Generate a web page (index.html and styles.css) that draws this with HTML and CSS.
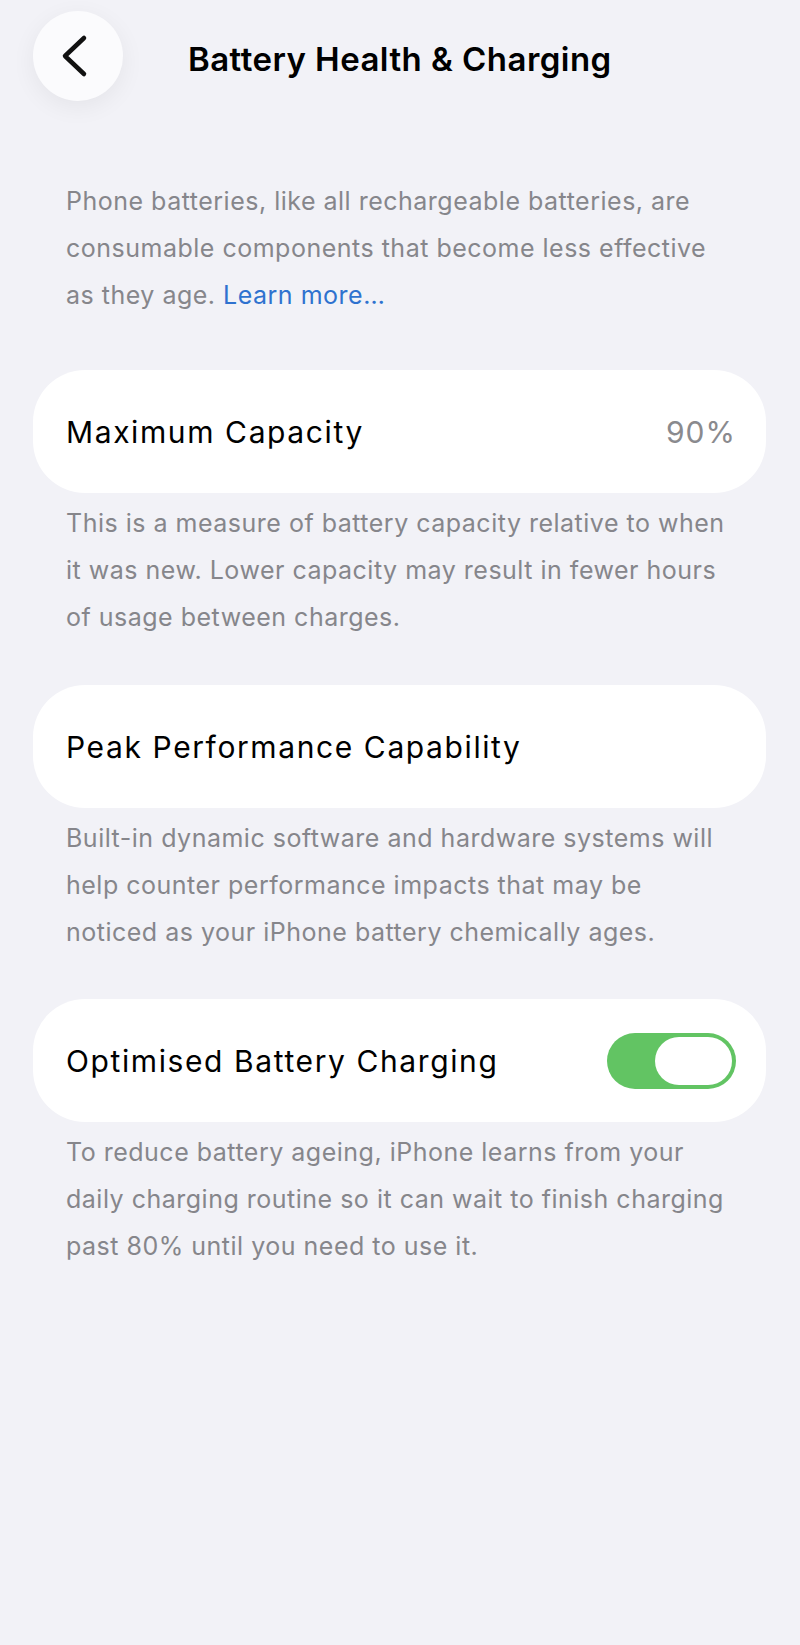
FILE: index.html
```html
<!DOCTYPE html>
<html lang="en">
<head>
    <meta charset="UTF-8">
    <meta name="viewport" content="width=device-width, initial-scale=1.0">
    <title>Battery Health &amp; Charging</title>
    <link rel="stylesheet" href="styles.css">
</head>
<body>
    <div class="page">
        <header class="nav-bar">
            <div class="back-button">
                <svg width="30" height="44" viewBox="0 0 30 44">
                    <path d="M23 4 L4 22 L23 40" fill="none" stroke="#111" stroke-width="4.5" stroke-linecap="round" stroke-linejoin="round"/>
                </svg>
            </div>
            <h1 class="nav-title">Battery Health &amp; Charging</h1>
        </header>

        <p class="intro">Phone batteries, like all rechargeable batteries, are consumable components that become less effective as they age. <span class="link">Learn more…</span></p>

        <div class="card card-first">
            <span class="card-label">Maximum Capacity</span>
            <span class="card-value">90%</span>
        </div>
        <p class="footer-text">This is a measure of battery capacity relative to when it was new. Lower capacity may result in fewer hours of usage between charges.</p>

        <div class="card">
            <span class="card-label">Peak Performance Capability</span>
        </div>
        <p class="footer-text">Built-in dynamic software and hardware systems will help counter performance impacts that may be noticed as your iPhone battery chemically ages.</p>

        <div class="card card-last">
            <span class="card-label">Optimised Battery Charging</span>
            <div class="toggle"><div class="toggle-knob"></div></div>
        </div>
        <p class="footer-text">To reduce battery ageing, iPhone learns from your daily charging routine so it can wait to finish charging past 80% until you need to use it.</p>
    </div>
</body>
</html>
```

FILE: styles.css
```css
body {
    margin: 0;
    background-color: #f2f2f7;
    font-family: Inter, "Noto Sans", sans-serif;
    color: #000;
}
.page {
    padding: 10px 34px 0 33px;
    min-height: 1635px;
}
.nav-bar {
    display: flex;
    align-items: center;
    height: 91px;
}
.back-button {
    width: 90px;
    height: 90px;
    border-radius: 50%;
    background-color: #fbfbfd;
    box-shadow: 0 6px 24px rgba(0, 0, 0, 0.06);
    display: flex;
    align-items: center;
    justify-content: center;
    padding-right: 4px;
    box-sizing: border-box;
}
.nav-title {
    margin: 6px 0 0 65px;
    font-size: 33px;
    font-weight: 600;
    letter-spacing: 0.45px;
}
.intro, .footer-text {
    margin: 0;
    padding: 0 30px 0 33px;
    font-size: 25px;
    line-height: 47px;
    color: #86868b;
    letter-spacing: 0.5px;
}
.intro {
    margin-top: 77px;
}
.link {
    color: #2f72cf;
}
.card {
    display: flex;
    align-items: center;
    justify-content: space-between;
    height: 123px;
    margin-top: 44px;
    padding: 0 30px 0 33px;
    background-color: #fff;
    border-radius: 52px;
}
.card-first {
    margin-top: 51px;
}
.card-last {
    margin-top: 43px;
}
.card-label {
    font-size: 30px;
    letter-spacing: 1.6px;
}
.card-value {
    font-size: 30px;
    color: #8a8a8e;
    letter-spacing: 1px;
}
.footer-text {
    margin-top: 7px;
}
.toggle {
    width: 129px;
    height: 56px;
    border-radius: 28px;
    background-color: #62c463;
    display: flex;
    align-items: center;
    justify-content: flex-end;
    padding: 0 4px;
    box-sizing: border-box;
}
.toggle-knob {
    width: 77px;
    height: 48px;
    border-radius: 24px;
    background-color: #fff;
}
```
